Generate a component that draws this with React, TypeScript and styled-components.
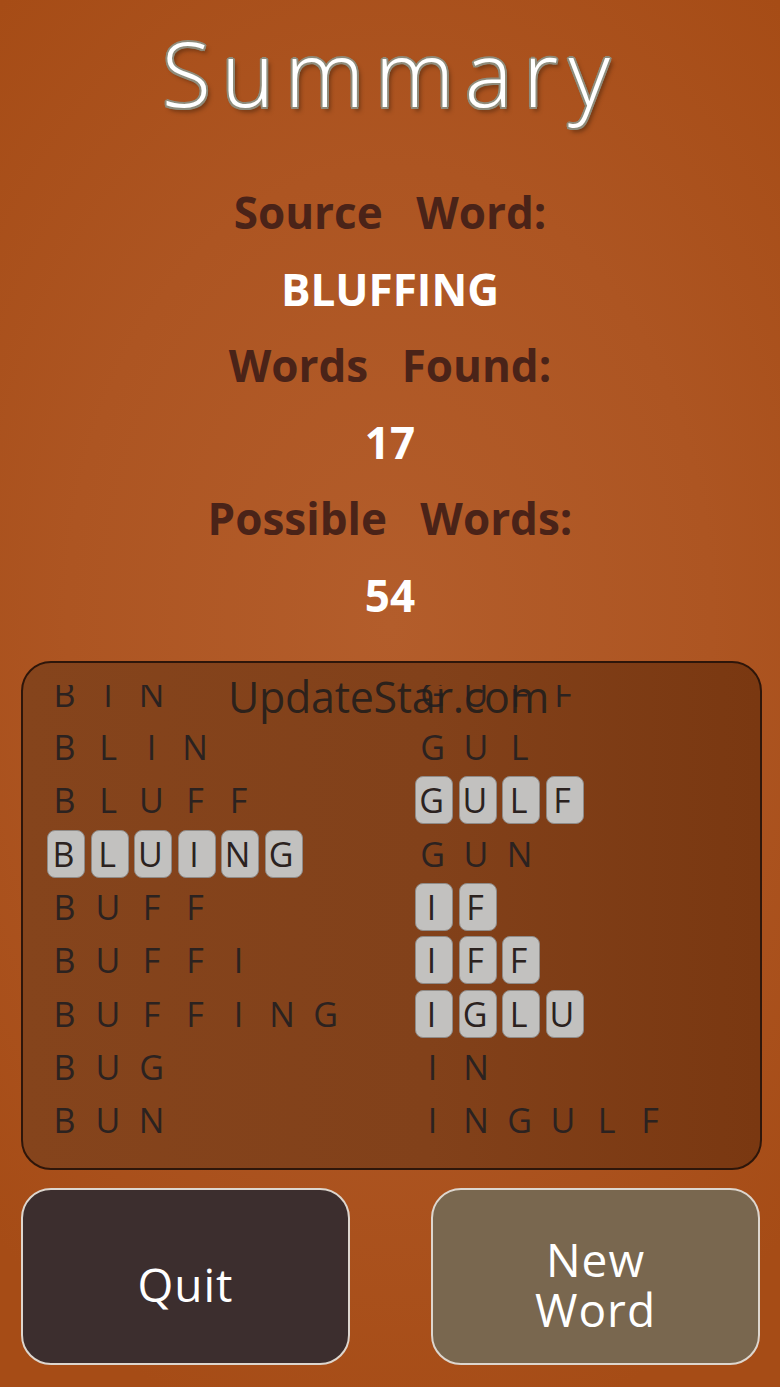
import styled, { createGlobalStyle } from 'styled-components';

const GlobalStyle = createGlobalStyle`
  html, body {
    margin: 0;
    padding: 0;
    background: #a84f19;
  }
  * {
    box-sizing: border-box;
  }
`;

type Word = { text: string; found?: boolean };

const LEFT_WORDS: Word[] = [
  { text: 'BIN' },
  { text: 'BLIN' },
  { text: 'BLUFF' },
  { text: 'BLUING', found: true },
  { text: 'BUFF' },
  { text: 'BUFFI' },
  { text: 'BUFFING' },
  { text: 'BUG' },
  { text: 'BUN' },
];

const RIGHT_WORDS: Word[] = [
  { text: 'GUFF' },
  { text: 'GUL' },
  { text: 'GULF', found: true },
  { text: 'GUN' },
  { text: 'IF', found: true },
  { text: 'IFF', found: true },
  { text: 'IGLU', found: true },
  { text: 'IN' },
  { text: 'INGULF' },
];

function WordRow({ word }: { word: Word }) {
  return (
    <_Row>
      {word.text.split('').map((letter, i) => (
        <_Letter key={i} $tile={!!word.found}>
          {letter}
        </_Letter>
      ))}
    </_Row>
  );
}

export default function App() {
  return (
    <>
      <GlobalStyle />
      <Page>
        <_Title>Summary</_Title>

        <_Stats>
          <_Label>Source Word:</_Label>
          <_Value>BLUFFING</_Value>
          <_Label>Words Found:</_Label>
          <_Value>17</_Value>
          <_Label>Possible Words:</_Label>
          <_Value>54</_Value>
        </_Stats>

        <_Panel>
          <_Viewport>
            <_Columns>
              <_Column>
                {LEFT_WORDS.map((w) => (
                  <WordRow key={w.text} word={w} />
                ))}
              </_Column>
              <_Column>
                {RIGHT_WORDS.map((w) => (
                  <WordRow key={w.text} word={w} />
                ))}
              </_Column>
            </_Columns>
          </_Viewport>
          <_Watermark>UpdateStar.com</_Watermark>
        </_Panel>

        <_Buttons>
          <_Button $variant="dark">Quit</_Button>
          <_Button $variant="olive">
            New
            <br />
            Word
          </_Button>
        </_Buttons>
      </Page>
    </>
  );
}

const Page = styled.div`
  width: 780px;
  min-height: 1387px;
  display: flex;
  flex-direction: column;
  align-items: center;
  padding: 17px 0 21px;
  background: radial-gradient(
    ellipse 75% 60% at 50% 45%,
    #b35d2b 0%,
    #ad5522 55%,
    #a64c16 100%
  );
  font-family: 'Open Sans', 'Noto Sans', sans-serif;
`;

const _Title = styled.h1`
  margin: 0;
  height: 110px;
  font-size: 90px;
  line-height: 110px;
  font-weight: 300;
  letter-spacing: 10.5px;
  padding-left: 2px;
  color: #ffffff;
  text-shadow: -1.5px -1.5px 0 #8e8c7c, 1.5px -1.5px 0 #8e8c7c,
    -1.5px 1.5px 0 #8e8c7c, 1.5px 1.5px 0 #8e8c7c, 0 2px 0 #8e8c7c,
    2px 0 0 #8e8c7c, -2px 0 0 #8e8c7c, 0 -2px 0 #8e8c7c,
    3px 4px 4px rgba(50, 25, 10, 0.55);
`;

const _Stats = styled.div`
  margin-top: 47px;
  display: flex;
  flex-direction: column;
  align-items: center;
`;

const _Label = styled.div`
  font-size: 44px;
  line-height: 76.5px;
  font-weight: 700;
  word-spacing: 22px;
  color: #4a2318;
`;

const _Value = styled(_Label)`
  color: #ffffff;
`;

const _Panel = styled.section`
  position: relative;
  margin-top: 28px;
  width: 741px;
  height: 509px;
  align-self: flex-start;
  margin-left: 21px;
  padding-top: 22px;
  border: 2px solid #2e160a;
  border-radius: 30px;
  background: linear-gradient(90deg, #85441c 0%, #82411a 55%, #7a3811 100%);
  overflow: hidden;
`;

const _Viewport = styled.div`
  height: 460px;
  overflow: hidden;
`;

const _Columns = styled.div`
  display: grid;
  grid-template-columns: 368px 1fr;
  padding-left: 24px;
  margin-top: -18px;
`;

const _Column = styled.div`
  display: flex;
  flex-direction: column;
`;

const _Row = styled.div`
  height: 53.33px;
  display: flex;
  align-items: center;
  gap: 5.5px;
`;

const _Letter = styled.span<{ $tile: boolean }>`
  width: 38px;
  height: 48px;
  display: flex;
  align-items: center;
  justify-content: center;
  padding-right: ${(p) => (p.$tile ? '5px' : '3px')};
  font-size: 34px;
  line-height: 1;
  font-weight: 400;
  color: #2b2220;
  border-radius: 8px;
  background: ${(p) => (p.$tile ? '#c2c1bf' : 'transparent')};
  border: 1px solid ${(p) => (p.$tile ? '#8f8b88' : 'transparent')};
`;

const _Watermark = styled.div`
  position: absolute;
  left: 205px;
  top: 12px;
  font-size: 43px;
  line-height: 43px;
  letter-spacing: -0.3px;
  font-weight: 400;
  color: rgba(35, 30, 28, 0.92);
  pointer-events: none;
`;

const _Buttons = styled.div`
  margin-top: 18px;
  width: 780px;
  padding: 0 20px 0 21px;
  display: flex;
  justify-content: space-between;
`;

const _Button = styled.button<{ $variant: 'dark' | 'olive' }>`
  width: 329px;
  height: 177px;
  padding-top: 16px;
  border-radius: 30px;
  border: 2px solid #ddd6ce;
  background: ${(p) => (p.$variant === 'dark' ? '#3c2e2e' : '#79674f')};
  color: #ffffff;
  font-family: 'Open Sans', 'Noto Sans', sans-serif;
  font-size: 46px;
  line-height: 50px;
  font-weight: 400;
  letter-spacing: 1px;
  cursor: pointer;
`;
